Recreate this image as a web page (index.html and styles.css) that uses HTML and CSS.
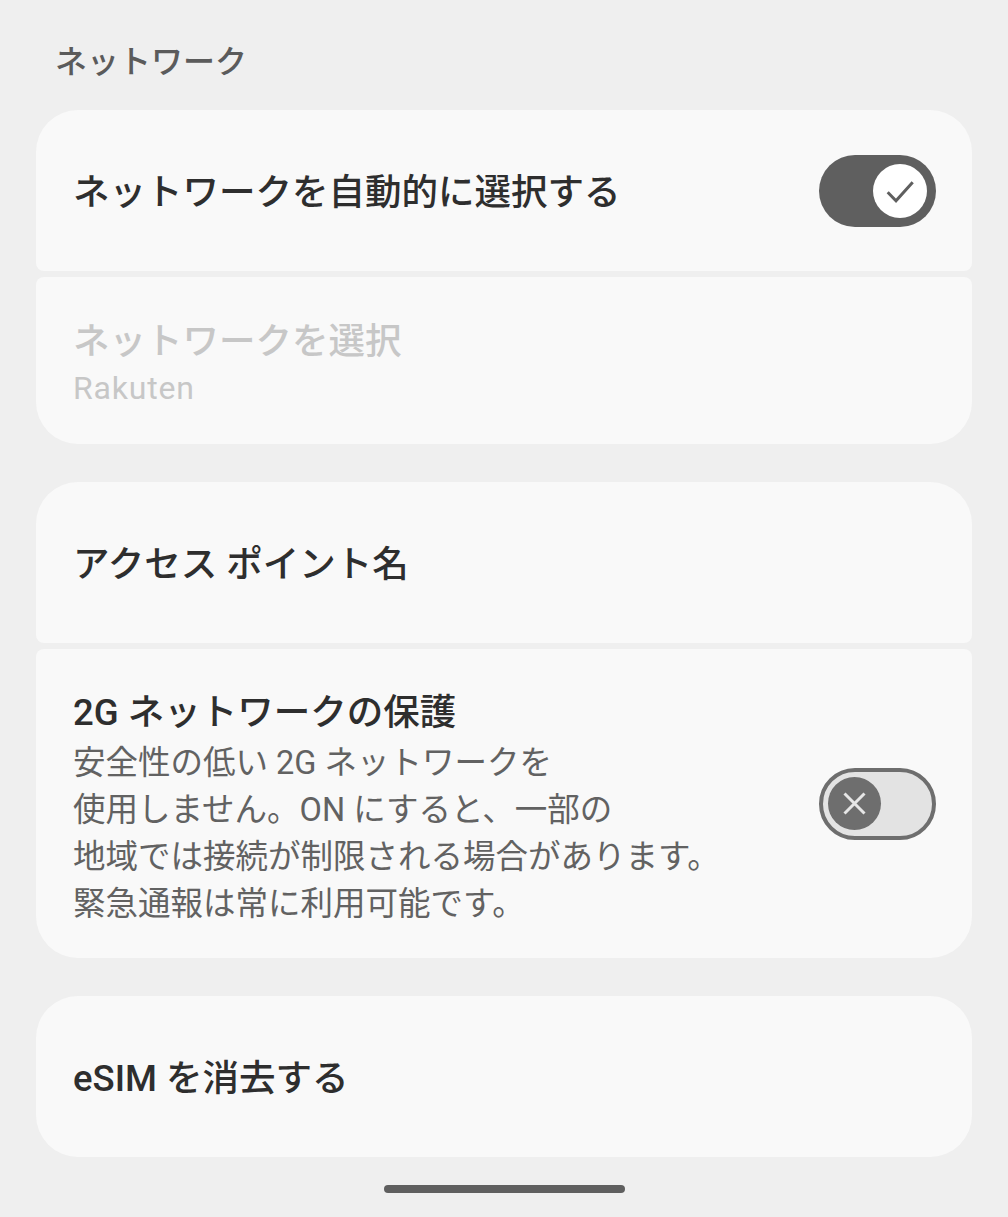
FILE: index.html
```html
<!DOCTYPE html>
<html lang="ja">
<head>
<meta charset="utf-8">
<title>ネットワーク</title>
<link rel="stylesheet" href="styles.css">
</head>
<body>
<div class="page">
  <div class="header">ネットワーク</div>

  <div class="group">
    <div class="row row-first row-toggle">
      <div class="title shift">ネットワークを自動的に選択する</div>
      <div class="switch switch-on">
        <div class="knob">
          <svg width="54" height="54" viewBox="0 0 54 54"><path d="M14.7 28.3 L23 36.7 L39.7 18.3" fill="none" stroke="#5f5f5f" stroke-width="3"/></svg>
        </div>
      </div>
    </div>
    <div class="row row-last row-two">
      <div class="title disabled">ネットワークを選択</div>
      <div class="sub disabled">Rakuten</div>
    </div>
  </div>

  <div class="group">
    <div class="row row-first row-single">
      <div class="title shift">アクセス ポイント名</div>
    </div>
    <div class="row row-last row-desc">
      <div class="text">
        <div class="title">2G ネットワークの保護</div>
        <div class="desc">安全性の低い 2G ネットワークを<br>使用しません。ON にすると、一部の<br>地域では接続が制限される場合があります。<br>緊急通報は常に利用可能です。</div>
      </div>
      <div class="switch switch-off">
        <div class="knob">
          <svg width="53" height="53" viewBox="0 0 53 53"><path d="M16.5 16.5 L36.5 36.5 M36.5 16.5 L16.5 36.5" fill="none" stroke="#e6e6e6" stroke-width="3"/></svg>
        </div>
      </div>
    </div>
  </div>

  <div class="group">
    <div class="row row-only row-single">
      <div class="title shift">eSIM を消去する</div>
    </div>
  </div>

  <div class="homebar-wrap"><div class="homebar"></div></div>
</div>
</body>
</html>
```

FILE: styles.css
```css
html, body {
  margin: 0;
  padding: 0;
  background: #efefef;
}
body {
  font-family: Roboto, "Noto Sans CJK JP", sans-serif;
  width: 1008px;
  height: 1217px;
  overflow: hidden;
}
.page {
  padding: 0 36px;
  display: flex;
  flex-direction: column;
}
.header {
  height: 110px;
  box-sizing: border-box;
  padding: 44px 0 0 19px;
  font-size: 32px;
  line-height: 36px;
  font-weight: 500;
  color: #5b5b5b;
}
.group {
  display: flex;
  flex-direction: column;
  gap: 6px;
  margin-bottom: 38px;
}
.row {
  background: #f9f9f9;
  border-radius: 8px;
  box-sizing: border-box;
  padding: 0 36px 0 37px;
  display: flex;
  align-items: center;
}
.row-first { border-radius: 42px 42px 8px 8px; }
.row-last { border-radius: 8px 8px 42px 42px; }
.row-only { border-radius: 42px; }
.row-toggle, .row-single {
  height: 161px;
  justify-content: space-between;
}
.shift { margin-top: 5px; }
.row-two {
  height: 167px;
  flex-direction: column;
  align-items: flex-start;
  justify-content: flex-start;
  padding-top: 42px;
}
.row-desc {
  height: 309px;
  justify-content: space-between;
  align-items: center;
}
.row-desc .text {
  padding-top: 10px;
}
.title {
  font-size: 36.5px;
  line-height: 46px;
  font-weight: 500;
  color: #2e2e2e;
}
.sub {
  font-size: 32px;
  line-height: 46px;
  letter-spacing: 0.8px;
}
.desc {
  font-size: 32.5px;
  line-height: 47px;
  color: #626262;
  margin-top: 4px;
}
.disabled { color: #c7c7c7; }

.switch {
  width: 117px;
  height: 72px;
  border-radius: 36px;
  box-sizing: border-box;
  display: flex;
  align-items: center;
  flex-shrink: 0;
}
.switch svg { display: block; }
.switch-on {
  background: #5f5f5f;
  justify-content: flex-end;
  padding-right: 9px;
}
.switch-on .knob {
  width: 54px;
  height: 54px;
  border-radius: 50%;
  background: #ffffff;
}
.switch-off {
  background: #e3e3e3;
  border: 4px solid #6e6e6e;
  justify-content: flex-start;
  padding-left: 5px;
}
.switch-off .knob {
  width: 53px;
  height: 53px;
  border-radius: 50%;
  background: #6e6e6e;
}
.homebar-wrap {
  display: flex;
  justify-content: center;
  margin-top: -10px;
}
.homebar {
  width: 241px;
  height: 8px;
  border-radius: 4px;
  background: #5f5f5f;
}
```
